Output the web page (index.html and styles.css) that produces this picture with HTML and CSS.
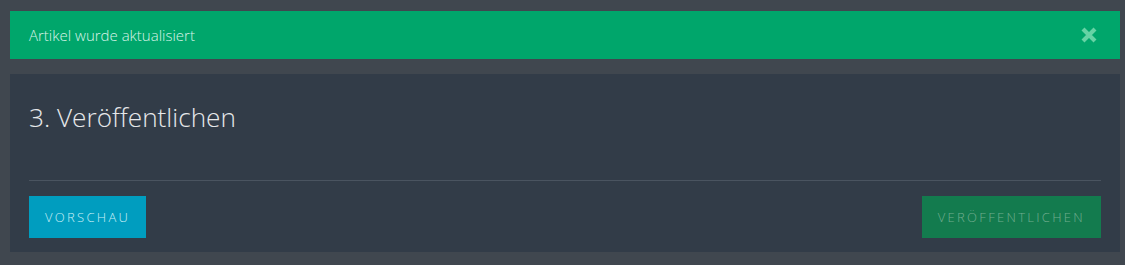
FILE: index.html
```html
<!DOCTYPE html>
<html lang="de">
<head>
<meta charset="utf-8">
<title>Veröffentlichen</title>
<link rel="stylesheet" href="styles.css">
</head>
<body>
<div class="page">
  <div class="alert">
    <span class="alert-text">Artikel wurde aktualisiert</span>
    <button class="alert-close" aria-label="Schließen">
      <svg width="18" height="18" viewBox="0 0 18 18"><path d="M3 3 L15 15 M15 3 L3 15" stroke="currentColor" stroke-width="4.2" stroke-linecap="butt" fill="none"/></svg>
    </button>
  </div>
  <section class="panel">
    <h2 class="panel-title">3. Veröffentlichen</h2>
    <div class="panel-actions">
      <button class="btn btn-preview">Vorschau</button>
      <button class="btn btn-publish">Veröffentlichen</button>
    </div>
  </section>
</div>
</body>
</html>
```
FILE: styles.css
```css
html, body {
  margin: 0;
  padding: 0;
  background: #40474f;
}
body {
  font-family: "Open Sans", "Noto Sans", sans-serif;
  color: #fff;
}
.page {
  padding: 11px 5px 0 10px;
  display: flex;
  flex-direction: column;
  gap: 15px;
}
.alert {
  height: 48px;
  background: #00a66b;
  display: flex;
  align-items: center;
  justify-content: space-between;
  padding: 0 22px 0 19px;
}
.alert-text {
  font-size: 15px;
  font-weight: 300;
  color: #d9f3e8;
}
.alert-close {
  border: 0;
  background: none;
  padding: 0;
  color: #66d3a5;
  display: flex;
}
.panel {
  background: #323c48;
  padding: 25px 19px 14px;
}
.panel-title {
  margin: 0;
  font-size: 26.2px;
  line-height: 36px;
  font-weight: 300;
  color: #e6e8ea;
  padding-bottom: 45px;
  border-bottom: 1px solid #4a5460;
}
.panel-actions {
  display: flex;
  justify-content: space-between;
  margin-top: 15px;
}
.btn {
  border: 0;
  height: 42px;
  padding: 0 16px;
  font-family: "Open Sans", "Noto Sans", sans-serif;
  font-size: 13px;
  font-weight: 300;
  letter-spacing: 2.3px;
  text-transform: uppercase;
}
.btn-preview {
  background: #009dbf;
  color: #c8eef6;
}
.btn-publish {
  background: #137b4e;
  color: #72ad8e;
}
```
